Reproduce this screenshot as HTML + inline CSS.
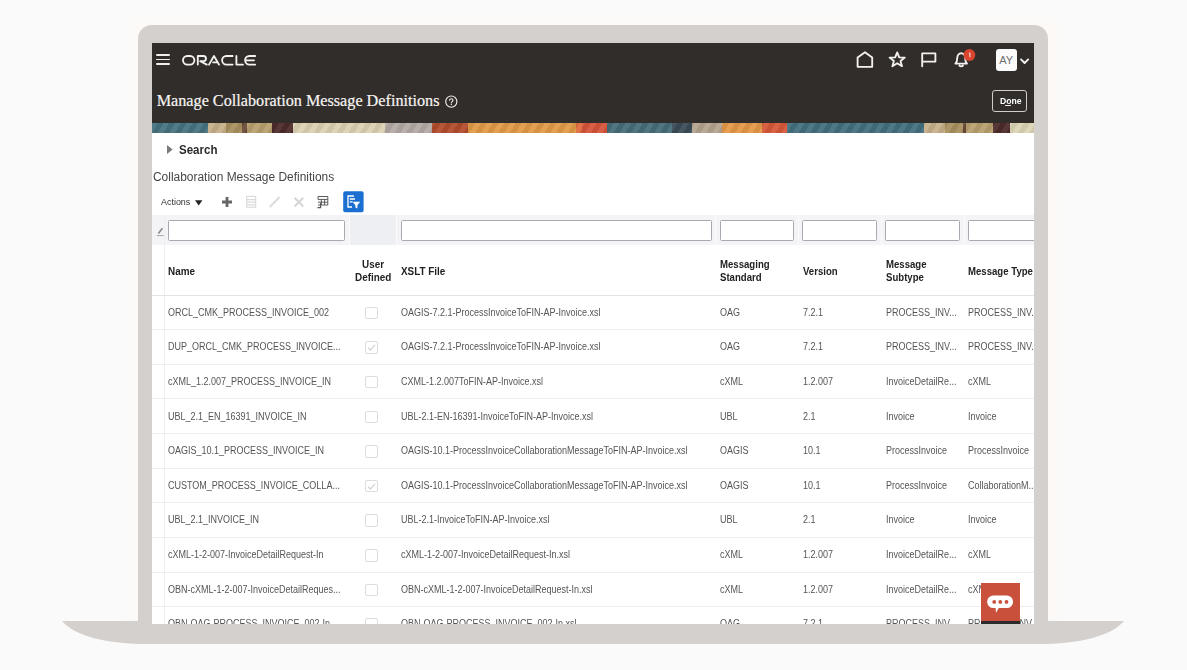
<!DOCTYPE html>
<html><head><meta charset="utf-8"><title>Manage Collaboration Message Definitions</title>
<style>
html,body{margin:0;padding:0;}
body{width:1187px;height:670px;overflow:hidden;background:#fafafa;position:relative;font-family:"Liberation Sans",sans-serif;}
.frame{position:absolute;left:138px;top:25px;width:910px;height:600px;background:#d4d0cd;border-radius:14px 14px 0 0;}
.screen{position:absolute;left:152px;top:43px;width:882px;height:581px;background:#fff;overflow:hidden;}
.r{position:absolute;}
.halo{position:absolute;left:128px;top:16px;width:930px;height:605px;background:#fcf9f7;border-radius:6px;filter:blur(3px);}
.t{position:absolute;white-space:nowrap;}
</style></head><body>
<div class="halo"></div>
<svg style="position:absolute;left:0;top:0" width="1187" height="670" viewBox="0 0 1187 670">
 <path d="M62 621 H1124 C1111 636 1081 644 1036 644 H150 C105 644 75 636 62 621 Z" fill="#d4d0cd"/>
</svg>
<div class="frame"></div>
<div class="screen">
<div class="r" style="left:0.00px;top:0.00px;width:882.00px;height:79.50px;background:#312d2a;"></div>
<div class="r" style="left:0.00px;top:79.50px;width:882.00px;height:10.10px;background:repeating-linear-gradient(120deg, rgba(255,255,255,0.06) 0 5px, rgba(0,0,0,0.06) 5px 10px),linear-gradient(90deg,#45737f 0px 56px,#c8b08a 56px 74px,#a89060 74px 90px,#6a4a38 90px 95px,#b8a070 95px 120px,#4e2a2a 120px 141px,#ddd0b2 141px 233px,#b4aaa6 233px 280px,#b24c2e 280px 316px,#e09a48 316px 424px,#de6a3e 424px 430px,#d6553a 430px 455px,#476c7a 455px 520px,#3c4c58 520px 540px,#b4a48e 540px 570px,#e49848 570px 610px,#d85838 610px 635px,#44707e 635px 772px,#c8b08a 772px 793px,#a89060 793px 811px,#6a4a38 811px 814px,#b8a070 814px 841px,#4e2a2a 841px 858px,#ddd4b6 858px 882px);"></div>
<div class="r" style="left:4.00px;top:11.30px;width:14.00px;height:1.70px;background:#f0eeec;border-radius:1px;"></div>
<div class="r" style="left:4.00px;top:15.80px;width:14.00px;height:1.70px;background:#f0eeec;border-radius:1px;"></div>
<div class="r" style="left:4.00px;top:20.30px;width:14.00px;height:1.70px;background:#f0eeec;border-radius:1px;"></div>
<svg class="r" style="left:0.00px;top:0.00px;" width="882" height="90" viewBox="152 43 882 90">
<g fill="none" stroke="#f4f2f0" stroke-width="1.85" stroke-linecap="round" stroke-linejoin="round">
 <!-- ORACLE -->
 <rect x="183" y="56" width="11.4" height="8.6" rx="4.3"/>
 <path d="M197.8 64.6 V56 H203.4 A2.6 2.6 0 0 1 203.4 61.2 H200.2 L206.8 64.6"/>
 <path d="M209 64.6 L214 56 L219 64.6 M213.2 62.4 H216.8"/>
 <path d="M232.6 56 H226.4 A4.3 4.3 0 0 0 226.4 64.6 H232.6"/>
 <path d="M236.4 56 V64.6 H243"/>
 <path d="M255.2 56 H249.4 A4.3 4.3 0 0 0 249.4 64.6 H255.2 M246 60.3 H254"/>
 <!-- home -->
 <path d="M857.6 66.8 V57.6 L865 52.2 L872.2 57.6 V66.8 Z"/>
 <!-- star -->
 <path d="M897.2 52.4 L899.2 57.4 L904.8 57.6 L900.5 61 L902 66.2 L897.2 63.2 L892.4 66.2 L893.9 61 L889.6 57.6 L895.2 57.4 Z"/>
 <!-- flag -->
 <path d="M922.2 66.2 V53.4 H935.4 V61.6 H922.2"/>
 <!-- bell -->
 <path d="M955.4 63.6 H967 C965.4 62 965.2 60.6 965.2 58.4 C965.2 55.2 963.4 53.2 961.2 53.2 C959 53.2 957.2 55.2 957.2 58.4 C957.2 60.6 957 62 955.4 63.6 Z M959.4 65.6 C960.2 66.6 962.2 66.6 963 65.6"/>
 <!-- chevron -->
 <path d="M1021 59.4 L1024.6 63 L1028.2 59.4"/>
 <!-- help -->
 <circle cx="451.3" cy="101.6" r="5.6" stroke-width="1.1"/>
 <path d="M449.6 100.2 C449.6 98.2 453 98.2 453 100.2 C453 101.6 451.3 101.6 451.3 103" stroke-width="1.1"/>
</g>
<circle cx="451.3" cy="104.6" r="0.7" fill="#f4f2f0"/>
<circle cx="969.4" cy="55" r="5.9" fill="#d9452f"/>
<path d="M969.1 53.4 L969.9 52.8 V57.2" fill="none" stroke="#fff" stroke-width="0.9"/>
</svg>
<div class="r" style="left:843.80px;top:6.00px;width:21.40px;height:21.90px;background:#fbfbfb;border-radius:3px;"></div>
<div class="t" style="left:847.20px;top:11.69px;font-size:11px;line-height:11px;color:#6f6f6f;font-weight:normal;font-family:'Liberation Sans',sans-serif;">AY</div>
<div class="t" style="left:4.70px;top:50.43px;font-size:16.2px;line-height:16.2px;color:#f6f4f2;font-weight:normal;font-family:'Liberation Serif',sans-serif;-webkit-text-stroke:0.2px #f6f4f2;">Manage Collaboration Message Definitions</div>
<div class="r" style="left:840.20px;top:47.10px;width:35.00px;height:21.50px;border:1.2px solid #cfcccb;border-radius:3px;box-sizing:border-box;"></div>
<div class="t" style="left:847.80px;top:53.17px;font-size:9.6px;line-height:9.6px;color:#ffffff;font-weight:bold;font-family:'Liberation Sans',sans-serif;transform:scaleX(0.9);transform-origin:0 0;">Done</div>
<div class="r" style="left:852.50px;top:62.40px;width:6.00px;height:0.80px;background:#eee;"></div>
<svg class="r" style="left:14.00px;top:101.00px;" width="8" height="12" viewBox="0 0 8 12"><path d="M1 1 L6.6 5.5 L1 10 Z" fill="#7a7a7a"/></svg>
<div class="t" style="left:26.70px;top:101.04px;font-size:12px;line-height:12px;color:#2b2b2b;font-weight:bold;font-family:'Liberation Sans',sans-serif;transform:scaleX(0.96);transform-origin:0 0;">Search</div>
<div class="t" style="left:0.80px;top:127.84px;font-size:12px;line-height:12px;color:#464646;font-weight:normal;font-family:'Liberation Sans',sans-serif;transform:scaleX(0.995);transform-origin:0 0;">Collaboration Message Definitions</div>
<div class="t" style="left:8.70px;top:154.16px;font-size:9.5px;line-height:9.5px;color:#333;font-weight:normal;font-family:'Liberation Sans',sans-serif;transform:scaleX(0.94);transform-origin:0 0;">Actions</div>
<svg class="r" style="left:42.00px;top:156.00px;" width="10" height="8" viewBox="194 199 10 8"><path d="M195 200.2 H202.4 L198.7 205.4 Z" fill="#222"/></svg>
<svg class="r" style="left:63.00px;top:145.00px;" width="155" height="28" viewBox="215 188 155 28">
 <path d="M227 197 V207 M222 202 H232" stroke="#676767" stroke-width="2.8"/>
 <g stroke="#dcdcdc" stroke-width="1.2" fill="none">
  <rect x="246.6" y="196.4" width="9" height="10.8"/>
  <path d="M246.6 199.6 H255.6 M246.6 202.2 H255.6 M246.6 204.8 H255.6"/>
 </g>
 <path d="M269.8 207 L279.6 197" stroke="#dcdcdc" stroke-width="2"/>
 <path d="M294.6 197.8 L303.2 206.6 M303.2 197.8 L294.6 206.6" stroke="#d6d6d6" stroke-width="2.2"/>
 <g stroke="#5a5a5a" stroke-width="1" fill="none">
  <path d="M318 196.5 H327.8 M318 199.4 H327.8 M318 202.2 H327.8 M318 205 H327.8 M321.3 199.4 V205 M324.6 199.4 V205 M318 196.5 V199.4 M327.8 196.5 V205"/>
  <path d="M317.5 207.6 H320.6 V203" stroke-width="1.2"/>
 </g>
 <rect x="343.2" y="191.2" width="20.4" height="21" rx="2" fill="#1b6fd1"/>
 <g fill="none" stroke="#fff" stroke-width="1.3">
  <path d="M354 196 H348 V207 H352"/>
  <path d="M349.8 199 H355 M349.8 201.8 H352.6"/>
 </g>
 <path d="M352.6 201.8 H360.2 L357.4 205.2 V208.4 L355.4 207.4 V205.2 Z" fill="#fff"/>
</svg>
<div class="r" style="left:0.00px;top:171.90px;width:882.00px;height:30.30px;background:#f4f4f7;"></div>
<div class="r" style="left:197.00px;top:171.90px;width:47.50px;height:30.30px;background:#eeeff3;border-left:1.5px solid #fbfbfd;border-right:1.5px solid #fbfbfd;box-sizing:border-box;"></div>
<div class="r" style="left:16.20px;top:177.30px;width:176.80px;height:20.70px;background:#fff;border:1.4px solid #a9a9b1;border-radius:1.5px;box-sizing:border-box;"></div>
<div class="r" style="left:249.00px;top:177.30px;width:311.20px;height:20.70px;background:#fff;border:1.4px solid #a9a9b1;border-radius:1.5px;box-sizing:border-box;"></div>
<div class="r" style="left:567.50px;top:177.30px;width:74.70px;height:20.70px;background:#fff;border:1.4px solid #a9a9b1;border-radius:1.5px;box-sizing:border-box;"></div>
<div class="r" style="left:650.30px;top:177.30px;width:74.90px;height:20.70px;background:#fff;border:1.4px solid #a9a9b1;border-radius:1.5px;box-sizing:border-box;"></div>
<div class="r" style="left:733.30px;top:177.30px;width:74.70px;height:20.70px;background:#fff;border:1.4px solid #a9a9b1;border-radius:1.5px;box-sizing:border-box;"></div>
<div class="r" style="left:816.40px;top:177.30px;width:91.60px;height:20.70px;background:#fff;border:1.4px solid #a9a9b1;border-radius:1.5px;box-sizing:border-box;"></div>
<div class="r" style="left:562.50px;top:171.90px;width:1.50px;height:30.30px;background:#fbfbfd;"></div>
<div class="r" style="left:645.60px;top:171.90px;width:1.50px;height:30.30px;background:#fbfbfd;"></div>
<div class="r" style="left:728.60px;top:171.90px;width:1.50px;height:30.30px;background:#fbfbfd;"></div>
<div class="r" style="left:811.80px;top:171.90px;width:1.50px;height:30.30px;background:#fbfbfd;"></div>
<svg class="r" style="left:3.00px;top:183.00px;" width="10" height="12" viewBox="155 226 10 12"><path d="M158.4 233.6 L162.4 228.2" stroke="#8a8a8a" stroke-width="1.6"/><path d="M156.8 235.6 H163.6" stroke="#9a9a9a" stroke-width="0.9"/></svg>
<div class="r" style="left:11.60px;top:171.90px;width:1.00px;height:409.10px;background:#efeff2;"></div>
<div class="r" style="left:0.00px;top:251.60px;width:882.00px;height:1.00px;background:#e3e3e3;"></div>
<div class="t" style="left:16.20px;top:223.74px;font-size:10px;line-height:10px;color:#222;font-weight:bold;font-family:'Liberation Sans',sans-serif;transform:scaleX(0.99);transform-origin:0 0;">Name</div>
<div class="t" style="left:209.50px;top:217.34px;font-size:10px;line-height:10px;color:#222;font-weight:bold;font-family:'Liberation Sans',sans-serif;transform:scaleX(0.99);transform-origin:0 0;">User</div>
<div class="t" style="left:202.80px;top:229.84px;font-size:10px;line-height:10px;color:#222;font-weight:bold;font-family:'Liberation Sans',sans-serif;transform:scaleX(0.99);transform-origin:0 0;">Defined</div>
<div class="t" style="left:248.80px;top:223.74px;font-size:10px;line-height:10px;color:#222;font-weight:bold;font-family:'Liberation Sans',sans-serif;transform:scaleX(0.99);transform-origin:0 0;">XSLT File</div>
<div class="t" style="left:568.00px;top:217.34px;font-size:10px;line-height:10px;color:#222;font-weight:bold;font-family:'Liberation Sans',sans-serif;transform:scaleX(0.96);transform-origin:0 0;">Messaging</div>
<div class="t" style="left:568.00px;top:229.84px;font-size:10px;line-height:10px;color:#222;font-weight:bold;font-family:'Liberation Sans',sans-serif;transform:scaleX(0.96);transform-origin:0 0;">Standard</div>
<div class="t" style="left:650.50px;top:223.74px;font-size:10px;line-height:10px;color:#222;font-weight:bold;font-family:'Liberation Sans',sans-serif;transform:scaleX(0.96);transform-origin:0 0;">Version</div>
<div class="t" style="left:733.60px;top:217.34px;font-size:10px;line-height:10px;color:#222;font-weight:bold;font-family:'Liberation Sans',sans-serif;transform:scaleX(0.96);transform-origin:0 0;">Message</div>
<div class="t" style="left:733.60px;top:229.84px;font-size:10px;line-height:10px;color:#222;font-weight:bold;font-family:'Liberation Sans',sans-serif;transform:scaleX(0.96);transform-origin:0 0;">Subtype</div>
<div class="t" style="left:816.40px;top:223.74px;font-size:10px;line-height:10px;color:#222;font-weight:bold;font-family:'Liberation Sans',sans-serif;transform:scaleX(0.96);transform-origin:0 0;">Message Type</div>
<div class="t" style="left:16.20px;top:264.64px;font-size:10px;line-height:10px;color:#555555;font-weight:normal;font-family:'Liberation Sans',sans-serif;transform:scaleX(0.9);transform-origin:0 0;">ORCL_CMK_PROCESS_INVOICE_002</div>
<div class="t" style="left:248.80px;top:264.64px;font-size:10px;line-height:10px;color:#555555;font-weight:normal;font-family:'Liberation Sans',sans-serif;transform:scaleX(0.9);transform-origin:0 0;">OAGIS-7.2.1-ProcessInvoiceToFIN-AP-Invoice.xsl</div>
<div class="t" style="left:568.00px;top:264.64px;font-size:10px;line-height:10px;color:#555555;font-weight:normal;font-family:'Liberation Sans',sans-serif;transform:scaleX(0.9);transform-origin:0 0;">OAG</div>
<div class="t" style="left:650.50px;top:264.64px;font-size:10px;line-height:10px;color:#555555;font-weight:normal;font-family:'Liberation Sans',sans-serif;transform:scaleX(0.9);transform-origin:0 0;">7.2.1</div>
<div class="t" style="left:733.60px;top:264.64px;font-size:10px;line-height:10px;color:#555555;font-weight:normal;font-family:'Liberation Sans',sans-serif;transform:scaleX(0.9);transform-origin:0 0;">PROCESS_INV...</div>
<div class="t" style="left:816.40px;top:264.64px;font-size:10px;line-height:10px;color:#555555;font-weight:normal;font-family:'Liberation Sans',sans-serif;transform:scaleX(0.9);transform-origin:0 0;">PROCESS_INV...</div>
<div class="r" style="left:213.00px;top:263.70px;width:12.50px;height:12.50px;border:1px solid #dddddd;border-radius:2px;box-sizing:border-box;background:#fff;"></div>
<div class="r" style="left:0.00px;top:286.23px;width:882.00px;height:1.00px;background:#eeeeee;"></div>
<div class="t" style="left:16.20px;top:299.27px;font-size:10px;line-height:10px;color:#555555;font-weight:normal;font-family:'Liberation Sans',sans-serif;transform:scaleX(0.9);transform-origin:0 0;">DUP_ORCL_CMK_PROCESS_INVOICE...</div>
<div class="t" style="left:248.80px;top:299.27px;font-size:10px;line-height:10px;color:#555555;font-weight:normal;font-family:'Liberation Sans',sans-serif;transform:scaleX(0.9);transform-origin:0 0;">OAGIS-7.2.1-ProcessInvoiceToFIN-AP-Invoice.xsl</div>
<div class="t" style="left:568.00px;top:299.27px;font-size:10px;line-height:10px;color:#555555;font-weight:normal;font-family:'Liberation Sans',sans-serif;transform:scaleX(0.9);transform-origin:0 0;">OAG</div>
<div class="t" style="left:650.50px;top:299.27px;font-size:10px;line-height:10px;color:#555555;font-weight:normal;font-family:'Liberation Sans',sans-serif;transform:scaleX(0.9);transform-origin:0 0;">7.2.1</div>
<div class="t" style="left:733.60px;top:299.27px;font-size:10px;line-height:10px;color:#555555;font-weight:normal;font-family:'Liberation Sans',sans-serif;transform:scaleX(0.9);transform-origin:0 0;">PROCESS_INV...</div>
<div class="t" style="left:816.40px;top:299.27px;font-size:10px;line-height:10px;color:#555555;font-weight:normal;font-family:'Liberation Sans',sans-serif;transform:scaleX(0.9);transform-origin:0 0;">PROCESS_INV...</div>
<div class="r" style="left:213.00px;top:298.33px;width:12.50px;height:12.50px;border:1px solid #dddddd;border-radius:2px;box-sizing:border-box;background:#fff;"></div>
<svg class="r" style="left:213.00px;top:298.33px;" width="13" height="13" viewBox="0 0 13 13"><path d="M3 6.6 L5.4 9 L10 3.8" fill="none" stroke="#d2d2d2" stroke-width="1.2"/></svg>
<div class="r" style="left:0.00px;top:320.86px;width:882.00px;height:1.00px;background:#eeeeee;"></div>
<div class="t" style="left:16.20px;top:333.90px;font-size:10px;line-height:10px;color:#555555;font-weight:normal;font-family:'Liberation Sans',sans-serif;transform:scaleX(0.9);transform-origin:0 0;">cXML_1.2.007_PROCESS_INVOICE_IN</div>
<div class="t" style="left:248.80px;top:333.90px;font-size:10px;line-height:10px;color:#555555;font-weight:normal;font-family:'Liberation Sans',sans-serif;transform:scaleX(0.9);transform-origin:0 0;">CXML-1.2.007ToFIN-AP-Invoice.xsl</div>
<div class="t" style="left:568.00px;top:333.90px;font-size:10px;line-height:10px;color:#555555;font-weight:normal;font-family:'Liberation Sans',sans-serif;transform:scaleX(0.9);transform-origin:0 0;">cXML</div>
<div class="t" style="left:650.50px;top:333.90px;font-size:10px;line-height:10px;color:#555555;font-weight:normal;font-family:'Liberation Sans',sans-serif;transform:scaleX(0.9);transform-origin:0 0;">1.2.007</div>
<div class="t" style="left:733.60px;top:333.90px;font-size:10px;line-height:10px;color:#555555;font-weight:normal;font-family:'Liberation Sans',sans-serif;transform:scaleX(0.9);transform-origin:0 0;">InvoiceDetailRe...</div>
<div class="t" style="left:816.40px;top:333.90px;font-size:10px;line-height:10px;color:#555555;font-weight:normal;font-family:'Liberation Sans',sans-serif;transform:scaleX(0.9);transform-origin:0 0;">cXML</div>
<div class="r" style="left:213.00px;top:332.96px;width:12.50px;height:12.50px;border:1px solid #dddddd;border-radius:2px;box-sizing:border-box;background:#fff;"></div>
<div class="r" style="left:0.00px;top:355.49px;width:882.00px;height:1.00px;background:#eeeeee;"></div>
<div class="t" style="left:16.20px;top:368.53px;font-size:10px;line-height:10px;color:#555555;font-weight:normal;font-family:'Liberation Sans',sans-serif;transform:scaleX(0.9);transform-origin:0 0;">UBL_2.1_EN_16391_INVOICE_IN</div>
<div class="t" style="left:248.80px;top:368.53px;font-size:10px;line-height:10px;color:#555555;font-weight:normal;font-family:'Liberation Sans',sans-serif;transform:scaleX(0.9);transform-origin:0 0;">UBL-2.1-EN-16391-InvoiceToFIN-AP-Invoice.xsl</div>
<div class="t" style="left:568.00px;top:368.53px;font-size:10px;line-height:10px;color:#555555;font-weight:normal;font-family:'Liberation Sans',sans-serif;transform:scaleX(0.9);transform-origin:0 0;">UBL</div>
<div class="t" style="left:650.50px;top:368.53px;font-size:10px;line-height:10px;color:#555555;font-weight:normal;font-family:'Liberation Sans',sans-serif;transform:scaleX(0.9);transform-origin:0 0;">2.1</div>
<div class="t" style="left:733.60px;top:368.53px;font-size:10px;line-height:10px;color:#555555;font-weight:normal;font-family:'Liberation Sans',sans-serif;transform:scaleX(0.9);transform-origin:0 0;">Invoice</div>
<div class="t" style="left:816.40px;top:368.53px;font-size:10px;line-height:10px;color:#555555;font-weight:normal;font-family:'Liberation Sans',sans-serif;transform:scaleX(0.9);transform-origin:0 0;">Invoice</div>
<div class="r" style="left:213.00px;top:367.59px;width:12.50px;height:12.50px;border:1px solid #dddddd;border-radius:2px;box-sizing:border-box;background:#fff;"></div>
<div class="r" style="left:0.00px;top:390.12px;width:882.00px;height:1.00px;background:#eeeeee;"></div>
<div class="t" style="left:16.20px;top:403.16px;font-size:10px;line-height:10px;color:#555555;font-weight:normal;font-family:'Liberation Sans',sans-serif;transform:scaleX(0.9);transform-origin:0 0;">OAGIS_10.1_PROCESS_INVOICE_IN</div>
<div class="t" style="left:248.80px;top:403.16px;font-size:10px;line-height:10px;color:#555555;font-weight:normal;font-family:'Liberation Sans',sans-serif;transform:scaleX(0.9);transform-origin:0 0;">OAGIS-10.1-ProcessInvoiceCollaborationMessageToFIN-AP-Invoice.xsl</div>
<div class="t" style="left:568.00px;top:403.16px;font-size:10px;line-height:10px;color:#555555;font-weight:normal;font-family:'Liberation Sans',sans-serif;transform:scaleX(0.9);transform-origin:0 0;">OAGIS</div>
<div class="t" style="left:650.50px;top:403.16px;font-size:10px;line-height:10px;color:#555555;font-weight:normal;font-family:'Liberation Sans',sans-serif;transform:scaleX(0.9);transform-origin:0 0;">10.1</div>
<div class="t" style="left:733.60px;top:403.16px;font-size:10px;line-height:10px;color:#555555;font-weight:normal;font-family:'Liberation Sans',sans-serif;transform:scaleX(0.9);transform-origin:0 0;">ProcessInvoice</div>
<div class="t" style="left:816.40px;top:403.16px;font-size:10px;line-height:10px;color:#555555;font-weight:normal;font-family:'Liberation Sans',sans-serif;transform:scaleX(0.9);transform-origin:0 0;">ProcessInvoice</div>
<div class="r" style="left:213.00px;top:402.22px;width:12.50px;height:12.50px;border:1px solid #dddddd;border-radius:2px;box-sizing:border-box;background:#fff;"></div>
<div class="r" style="left:0.00px;top:424.75px;width:882.00px;height:1.00px;background:#eeeeee;"></div>
<div class="t" style="left:16.20px;top:437.79px;font-size:10px;line-height:10px;color:#555555;font-weight:normal;font-family:'Liberation Sans',sans-serif;transform:scaleX(0.9);transform-origin:0 0;">CUSTOM_PROCESS_INVOICE_COLLA...</div>
<div class="t" style="left:248.80px;top:437.79px;font-size:10px;line-height:10px;color:#555555;font-weight:normal;font-family:'Liberation Sans',sans-serif;transform:scaleX(0.9);transform-origin:0 0;">OAGIS-10.1-ProcessInvoiceCollaborationMessageToFIN-AP-Invoice.xsl</div>
<div class="t" style="left:568.00px;top:437.79px;font-size:10px;line-height:10px;color:#555555;font-weight:normal;font-family:'Liberation Sans',sans-serif;transform:scaleX(0.9);transform-origin:0 0;">OAGIS</div>
<div class="t" style="left:650.50px;top:437.79px;font-size:10px;line-height:10px;color:#555555;font-weight:normal;font-family:'Liberation Sans',sans-serif;transform:scaleX(0.9);transform-origin:0 0;">10.1</div>
<div class="t" style="left:733.60px;top:437.79px;font-size:10px;line-height:10px;color:#555555;font-weight:normal;font-family:'Liberation Sans',sans-serif;transform:scaleX(0.9);transform-origin:0 0;">ProcessInvoice</div>
<div class="t" style="left:816.40px;top:437.79px;font-size:10px;line-height:10px;color:#555555;font-weight:normal;font-family:'Liberation Sans',sans-serif;transform:scaleX(0.9);transform-origin:0 0;">CollaborationM...</div>
<div class="r" style="left:213.00px;top:436.85px;width:12.50px;height:12.50px;border:1px solid #dddddd;border-radius:2px;box-sizing:border-box;background:#fff;"></div>
<svg class="r" style="left:213.00px;top:436.85px;" width="13" height="13" viewBox="0 0 13 13"><path d="M3 6.6 L5.4 9 L10 3.8" fill="none" stroke="#d2d2d2" stroke-width="1.2"/></svg>
<div class="r" style="left:0.00px;top:459.38px;width:882.00px;height:1.00px;background:#eeeeee;"></div>
<div class="t" style="left:16.20px;top:472.42px;font-size:10px;line-height:10px;color:#555555;font-weight:normal;font-family:'Liberation Sans',sans-serif;transform:scaleX(0.9);transform-origin:0 0;">UBL_2.1_INVOICE_IN</div>
<div class="t" style="left:248.80px;top:472.42px;font-size:10px;line-height:10px;color:#555555;font-weight:normal;font-family:'Liberation Sans',sans-serif;transform:scaleX(0.9);transform-origin:0 0;">UBL-2.1-InvoiceToFIN-AP-Invoice.xsl</div>
<div class="t" style="left:568.00px;top:472.42px;font-size:10px;line-height:10px;color:#555555;font-weight:normal;font-family:'Liberation Sans',sans-serif;transform:scaleX(0.9);transform-origin:0 0;">UBL</div>
<div class="t" style="left:650.50px;top:472.42px;font-size:10px;line-height:10px;color:#555555;font-weight:normal;font-family:'Liberation Sans',sans-serif;transform:scaleX(0.9);transform-origin:0 0;">2.1</div>
<div class="t" style="left:733.60px;top:472.42px;font-size:10px;line-height:10px;color:#555555;font-weight:normal;font-family:'Liberation Sans',sans-serif;transform:scaleX(0.9);transform-origin:0 0;">Invoice</div>
<div class="t" style="left:816.40px;top:472.42px;font-size:10px;line-height:10px;color:#555555;font-weight:normal;font-family:'Liberation Sans',sans-serif;transform:scaleX(0.9);transform-origin:0 0;">Invoice</div>
<div class="r" style="left:213.00px;top:471.48px;width:12.50px;height:12.50px;border:1px solid #dddddd;border-radius:2px;box-sizing:border-box;background:#fff;"></div>
<div class="r" style="left:0.00px;top:494.01px;width:882.00px;height:1.00px;background:#eeeeee;"></div>
<div class="t" style="left:16.20px;top:507.04px;font-size:10px;line-height:10px;color:#555555;font-weight:normal;font-family:'Liberation Sans',sans-serif;transform:scaleX(0.9);transform-origin:0 0;">cXML-1-2-007-InvoiceDetailRequest-In</div>
<div class="t" style="left:248.80px;top:507.04px;font-size:10px;line-height:10px;color:#555555;font-weight:normal;font-family:'Liberation Sans',sans-serif;transform:scaleX(0.9);transform-origin:0 0;">cXML-1-2-007-InvoiceDetailRequest-In.xsl</div>
<div class="t" style="left:568.00px;top:507.04px;font-size:10px;line-height:10px;color:#555555;font-weight:normal;font-family:'Liberation Sans',sans-serif;transform:scaleX(0.9);transform-origin:0 0;">cXML</div>
<div class="t" style="left:650.50px;top:507.04px;font-size:10px;line-height:10px;color:#555555;font-weight:normal;font-family:'Liberation Sans',sans-serif;transform:scaleX(0.9);transform-origin:0 0;">1.2.007</div>
<div class="t" style="left:733.60px;top:507.04px;font-size:10px;line-height:10px;color:#555555;font-weight:normal;font-family:'Liberation Sans',sans-serif;transform:scaleX(0.9);transform-origin:0 0;">InvoiceDetailRe...</div>
<div class="t" style="left:816.40px;top:507.04px;font-size:10px;line-height:10px;color:#555555;font-weight:normal;font-family:'Liberation Sans',sans-serif;transform:scaleX(0.9);transform-origin:0 0;">cXML</div>
<div class="r" style="left:213.00px;top:506.11px;width:12.50px;height:12.50px;border:1px solid #dddddd;border-radius:2px;box-sizing:border-box;background:#fff;"></div>
<div class="r" style="left:0.00px;top:528.64px;width:882.00px;height:1.00px;background:#eeeeee;"></div>
<div class="t" style="left:16.20px;top:541.68px;font-size:10px;line-height:10px;color:#555555;font-weight:normal;font-family:'Liberation Sans',sans-serif;transform:scaleX(0.9);transform-origin:0 0;">OBN-cXML-1-2-007-InvoiceDetailReques...</div>
<div class="t" style="left:248.80px;top:541.68px;font-size:10px;line-height:10px;color:#555555;font-weight:normal;font-family:'Liberation Sans',sans-serif;transform:scaleX(0.9);transform-origin:0 0;">OBN-cXML-1-2-007-InvoiceDetailRequest-In.xsl</div>
<div class="t" style="left:568.00px;top:541.68px;font-size:10px;line-height:10px;color:#555555;font-weight:normal;font-family:'Liberation Sans',sans-serif;transform:scaleX(0.9);transform-origin:0 0;">cXML</div>
<div class="t" style="left:650.50px;top:541.68px;font-size:10px;line-height:10px;color:#555555;font-weight:normal;font-family:'Liberation Sans',sans-serif;transform:scaleX(0.9);transform-origin:0 0;">1.2.007</div>
<div class="t" style="left:733.60px;top:541.68px;font-size:10px;line-height:10px;color:#555555;font-weight:normal;font-family:'Liberation Sans',sans-serif;transform:scaleX(0.9);transform-origin:0 0;">InvoiceDetailRe...</div>
<div class="t" style="left:816.40px;top:541.68px;font-size:10px;line-height:10px;color:#555555;font-weight:normal;font-family:'Liberation Sans',sans-serif;transform:scaleX(0.9);transform-origin:0 0;">cXML</div>
<div class="r" style="left:213.00px;top:540.74px;width:12.50px;height:12.50px;border:1px solid #dddddd;border-radius:2px;box-sizing:border-box;background:#fff;"></div>
<div class="r" style="left:0.00px;top:563.27px;width:882.00px;height:1.00px;background:#eeeeee;"></div>
<div class="t" style="left:16.20px;top:576.30px;font-size:10px;line-height:10px;color:#555555;font-weight:normal;font-family:'Liberation Sans',sans-serif;transform:scaleX(0.9);transform-origin:0 0;">OBN-OAG-PROCESS_INVOICE_002-In</div>
<div class="t" style="left:248.80px;top:576.30px;font-size:10px;line-height:10px;color:#555555;font-weight:normal;font-family:'Liberation Sans',sans-serif;transform:scaleX(0.9);transform-origin:0 0;">OBN-OAG-PROCESS_INVOICE_002-In.xsl</div>
<div class="t" style="left:568.00px;top:576.30px;font-size:10px;line-height:10px;color:#555555;font-weight:normal;font-family:'Liberation Sans',sans-serif;transform:scaleX(0.9);transform-origin:0 0;">OAG</div>
<div class="t" style="left:650.50px;top:576.30px;font-size:10px;line-height:10px;color:#555555;font-weight:normal;font-family:'Liberation Sans',sans-serif;transform:scaleX(0.9);transform-origin:0 0;">7.2.1</div>
<div class="t" style="left:733.60px;top:576.30px;font-size:10px;line-height:10px;color:#555555;font-weight:normal;font-family:'Liberation Sans',sans-serif;transform:scaleX(0.9);transform-origin:0 0;">PROCESS_INV...</div>
<div class="t" style="left:816.40px;top:576.30px;font-size:10px;line-height:10px;color:#555555;font-weight:normal;font-family:'Liberation Sans',sans-serif;transform:scaleX(0.9);transform-origin:0 0;">PROCESS_INV...</div>
<div class="r" style="left:213.00px;top:575.37px;width:12.50px;height:12.50px;border:1px solid #dddddd;border-radius:2px;box-sizing:border-box;background:#fff;"></div>
<div class="r" style="left:829.00px;top:539.50px;width:39.00px;height:43.50px;background:#c9503b;"></div>
<div class="r" style="left:829.00px;top:578.20px;width:38.50px;height:4.80px;background:#2c2a2a;"></div>
<svg class="r" style="left:829.00px;top:539.50px;" width="39" height="42" viewBox="981 582.5 39 42">
 <path d="M993.4 595 H1006.8 A6.3 6.3 0 0 1 1006.8 607.6 H998.8 L996 612.2 L995.6 607.6 H993.4 A6.3 6.3 0 0 1 993.4 595 Z" fill="#fff"/>
 <circle cx="994.2" cy="601.4" r="1.9" fill="#c9503b"/><circle cx="1000.3" cy="601.4" r="1.9" fill="#c9503b"/><circle cx="1006.5" cy="601.4" r="1.9" fill="#c9503b"/>
</svg>
</div>
</body></html>
